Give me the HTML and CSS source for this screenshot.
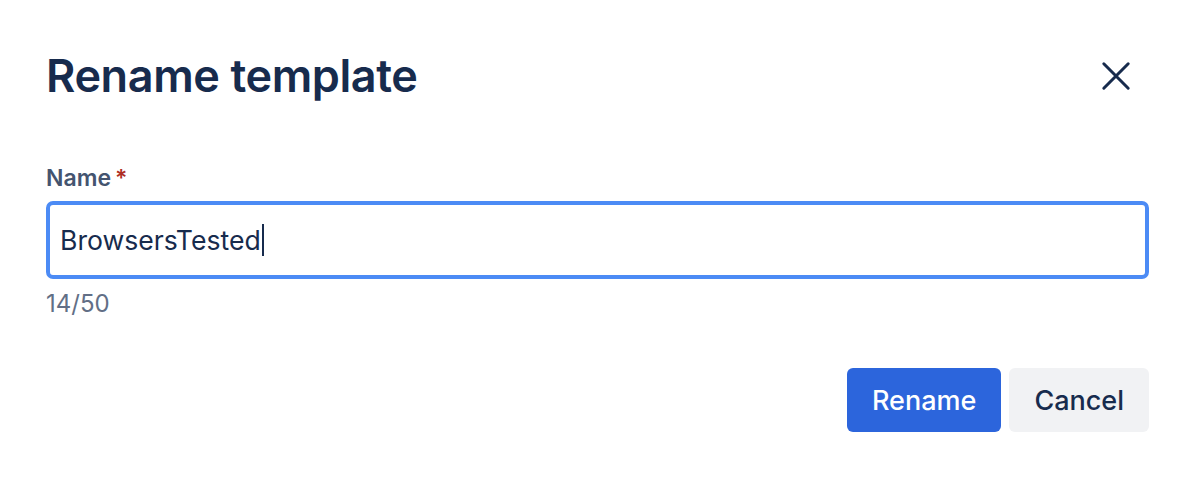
FILE: index.html
```html
<!DOCTYPE html>
<html lang="en">
<head>
<meta charset="utf-8">
<title>Rename template</title>
<link rel="stylesheet" href="styles.css">
</head>
<body>
<div class="dialog">
  <header class="dialog-header">
    <h1 class="dialog-title">Rename template</h1>
    <button class="close-btn" aria-label="Close">
      <svg width="32" height="32" viewBox="0 0 32 32" aria-hidden="true">
        <path d="M3 3 L29 29 M29 3 L3 29" stroke="#172B4D" stroke-width="3.2" stroke-linecap="round" fill="none"/>
      </svg>
    </button>
  </header>
  <form class="field">
    <label class="field-label">Name<span class="required">*</span></label>
    <div class="input-wrap">
      <span class="input-text">BrowsersTested</span><span class="caret"></span>
    </div>
    <div class="counter">14/50</div>
  </form>
  <footer class="dialog-footer">
    <button class="btn btn-primary">Rename</button>
    <button class="btn btn-subtle">Cancel</button>
  </footer>
</div>
</body>
</html>
```
FILE: styles.css
```css
html, body {
  margin: 0;
  padding: 0;
  background: #ffffff;
}
body {
  font-family: Inter, "Noto Sans", "Liberation Sans", sans-serif;
  color: #172B4D;
}
.dialog {
  width: 1189px;
  height: 481px;
  box-sizing: border-box;
  padding: 46px 40px 0 46px;
}
.dialog-header {
  display: flex;
  align-items: center;
  justify-content: space-between;
  height: 60px;
}
.dialog-title {
  margin: 0;
  font-size: 45px;
  font-weight: 600;
  letter-spacing: -0.4px;
  color: #172B4D;
  line-height: 60px;
}
.close-btn {
  border: 0;
  background: transparent;
  padding: 0;
  margin-right: 18px;
  width: 30px;
  height: 30px;
  display: flex;
  align-items: center;
  justify-content: center;
}
.close-btn svg {
  width: 30px;
  height: 30px;
}
.field {
  margin-top: 56px;
  display: flex;
  flex-direction: column;
}
.field-label {
  font-size: 23px;
  font-weight: 600;
  color: #44546F;
  line-height: 32px;
}
.required {
  color: #AE2E24;
  margin-left: 4px;
}
.input-wrap {
  margin-top: 7px;
  height: 78px;
  box-sizing: border-box;
  border: 4px solid #4C8BF5;
  border-radius: 7px;
  display: flex;
  align-items: center;
  padding-left: 10px;
}
.input-text {
  font-size: 26.6px;
  color: #172B4D;
}
.caret {
  display: inline-block;
  width: 2px;
  height: 32px;
  background: #172B4D;
  margin-left: 1px;
}
.counter {
  margin-top: 9px;
  font-size: 24px;
  color: #626F86;
  line-height: 32px;
}
.dialog-footer {
  margin-top: 48px;
  display: flex;
  justify-content: flex-end;
  gap: 8px;
}
.btn {
  height: 64px;
  border: 0;
  border-radius: 6px;
  font-family: inherit;
  font-size: 27px;
  font-weight: 500;
  padding: 0 25px;
}
.btn-primary {
  background: #2C65DC;
  color: #ffffff;
}
.btn-subtle {
  background: #F1F2F4;
  color: #172B4D;
}
```
